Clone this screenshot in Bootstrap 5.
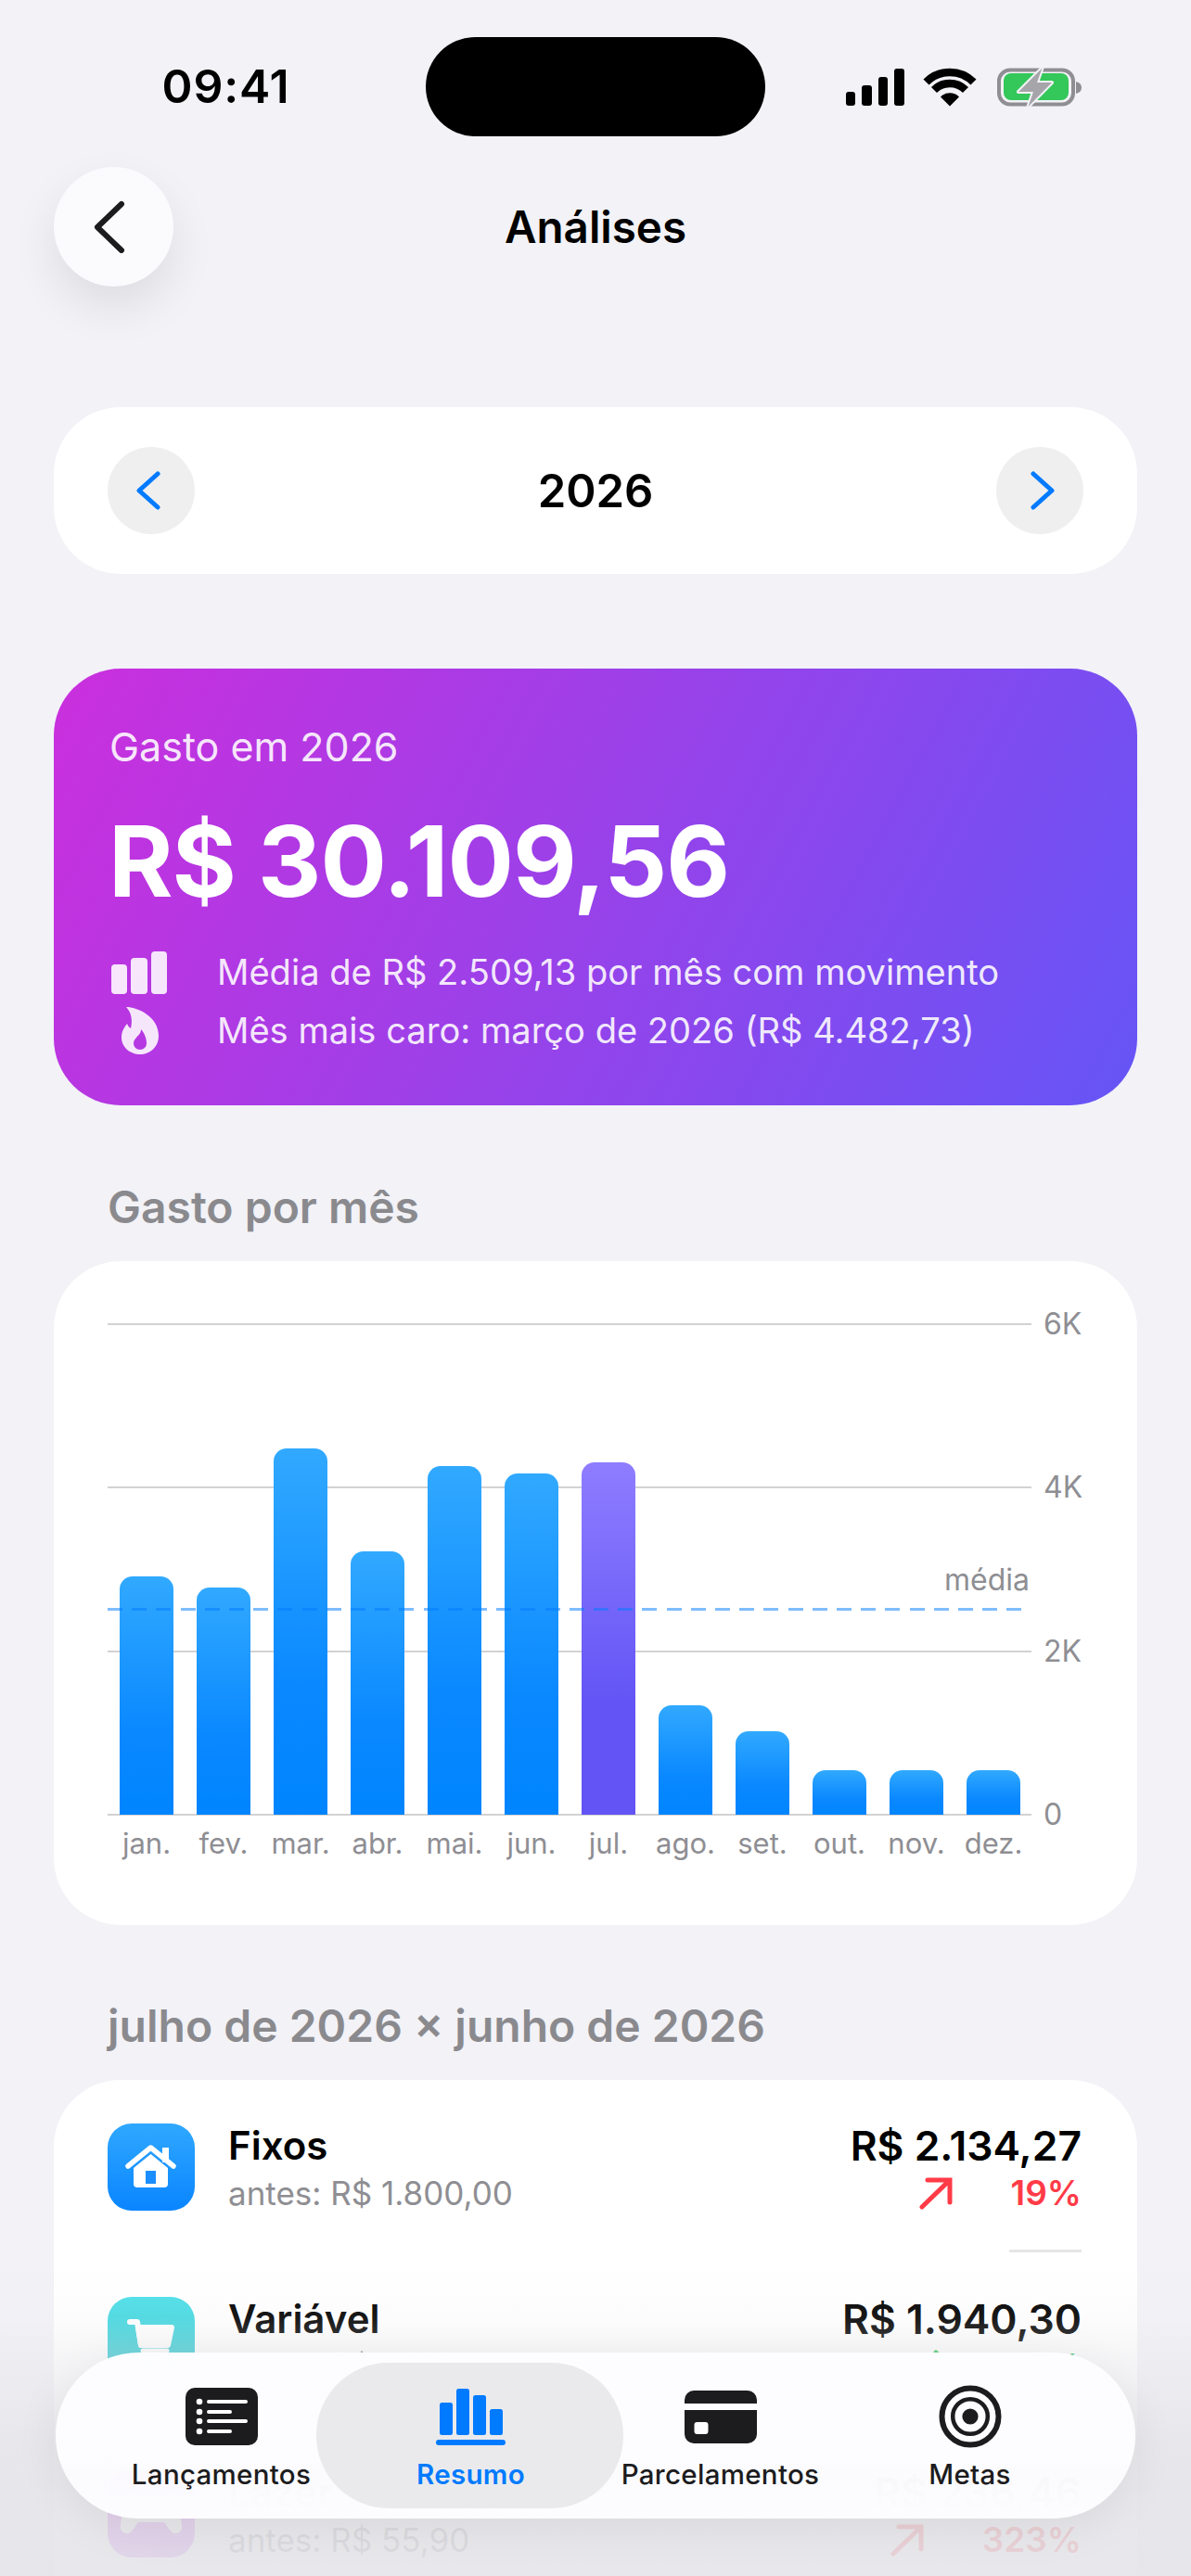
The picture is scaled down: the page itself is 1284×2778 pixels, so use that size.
<!DOCTYPE html>
<html lang="pt-BR">
<head>
    <meta charset="UTF-8">
    <meta name="viewport" content="width=device-width, initial-scale=1.0">
    <title>Análises</title>
    <link href="https://cdn.jsdelivr.net/npm/bootstrap@5.3.0/dist/css/bootstrap.min.css" rel="stylesheet">
    <style>
        body { background: #f2f2f7; font-family: Inter, "Liberation Sans", sans-serif; color: #000; }
        .screen { width: 1284px; height: 2778px; overflow: hidden; background: #f2f2f7; }
        .status-side { width: 459px; height: 107px; }
        .status-time { font-size: 50px; font-weight: 600; padding-left: 28px; letter-spacing: .8px; }
        .island { width: 366px; height: 107px; background: #000; border-radius: 54px; }
        .status-icons { padding-left: 86px; }
        .page { padding: 0 58px; }
        .nav-row { margin-top: 33px; height: 129px; }
        .back-btn { width: 129px; height: 129px; background: #fbfbfe; box-shadow: 0 22px 50px rgba(0,0,0,.09); }
        .back-btn svg { margin-right: 10px; }
        .screen-title { font-size: 47.5px; font-weight: 600; line-height: 58px; }
        .year-label { font-size: 49px; font-weight: 600; line-height: 58px; padding-top: 2px; }
        .soft-card { border: 0; border-radius: 72px; background: #fff; }
        .year-card { margin-top: 130px; height: 180px; padding: 0 58px; }
        .year-btn { width: 94px; height: 94px; background: #efefef; }
        .year-prev svg { margin-right: 6px; }
        .year-next svg { margin-left: 6px; }
        .hero { margin-top: 102px; height: 471px; padding: 60px 60px 0; color: #fff; background: linear-gradient(118deg, #cb2fdd 0%, #6555f6 100%); }
        .hero-label { font-size: 43px; line-height: 48px; color: rgba(255,255,255,.9); }
        .hero-total { font-size: 106px; font-weight: 700; line-height: 120px; margin-top: 40px; margin-left: -1px; letter-spacing: -1px; }
        .hero-line { font-size: 38.1px; line-height: 63px; color: rgba(255,255,255,.9); }
        .hero-lines { margin-top: 28px; }
        .hero-glyph { width: 116px; }
        .section-title { font-size: 48px; font-weight: 600; line-height: 58px; color: #8a8a8e; margin: 81px 0 29px 116px; }
        .section-title.second { margin-top: 80px; }
        .chart-card { height: 716px; padding: 68px 0 0 58px; }
        .plot { width: 1052px; height: 529px; }
        .grid-line { left: 0; width: 996px; height: 2px; background: #d2d2d4; }
        .grid-tick { left: 1009px; font-size: 32px; line-height: 40px; color: #8e8e93; transform: translateY(-20px); }
        .avg-line { left: 0; top: 306px; width: 996px; height: 3px; z-index: 2; background: repeating-linear-gradient(90deg, rgba(0,122,255,.5) 0 16px, transparent 16px 26.2px); }
        .avg-label { right: 58px; top: 256px; font-size: 32px; line-height: 40px; color: #8e8e93; }
        .chart-bars { height: 529px; padding-left: .5px; position: relative; z-index: 1; }
        .chart-col { width: 83px; display: flex; justify-content: center; align-items: flex-end; }
        .chart-bar { width: 58px; border-radius: 14px 14px 0 0; background: linear-gradient(180deg, #31a9ff 0%, #0a88ff 65%, #0085ff 100%); }
        .chart-bar.current { background: linear-gradient(180deg, #8e7dff 0%, #6254f5 70%, #6254f5 100%); }
        .chart-months { margin-top: 11px; padding-left: .5px; }
        .chart-month { width: 83px; text-align: center; font-size: 31px; line-height: 40px; color: #8e8e93; white-space: nowrap; }
        .compare-card { padding: 46px 60px 120px 58px; height: 900px; }
        .compare-row { height: 94px; }
        .cat-icon { width: 94px; height: 94px; border-radius: 26px; margin-right: 36px; margin-top: 1px; flex: none; }
        .cat-blue { background: linear-gradient(180deg, #2fa8ff, #0a85ff); }
        .cat-teal { background: linear-gradient(180deg, #4cdfe8, #2fc2c8); }
        .cat-purple { background: linear-gradient(180deg, #e04cf0, #bf5af2); }
        .row-name, .row-value { font-weight: 600; line-height: 50px; white-space: nowrap; }
        .row-name { font-size: 42px; }
        .row-value { font-size: 44.4px; }
        .row-prev { font-size: 35px; line-height: 52px; color: #8e8e93; white-space: nowrap; }
        .row-delta { font-size: 37px; line-height: 52px; font-weight: 600; gap: 63px; }
        .delta-up { color: #ff3b47; }
        .delta-down { color: #34c759; }
        .row-sep { width: 78px; height: 3px; background: #e6e6e8; margin: 43px 0 47px auto; }
        .bottom-fade { left: 0; right: 0; bottom: 0; height: 340px; z-index: 5; background: linear-gradient(180deg, rgba(229,229,233,0) 0%, rgba(229,229,233,.1) 18%, rgba(229,229,233,.35) 30%, rgba(229,229,233,.82) 60%, rgba(229,229,233,.9) 100%); }
        .tabbar { left: 60px; top: 2537px; width: 1164px; height: 179px; z-index: 6; border-radius: 90px; padding-left: 44px; background: linear-gradient(180deg, rgba(253,253,255,.995) 0%, rgba(253,253,255,.995) 64%, rgba(253,253,255,.9) 72%, rgba(253,253,255,.96) 90%, rgba(253,253,255,.98) 100%); box-shadow: 0 10px 50px rgba(0,0,0,.07); }
        .tab-item { width: 269px; height: 179px; font-size: 29.5px; font-weight: 500; letter-spacing: .3px; color: #1c1c1e; }
        .tab-art { height: 68px; margin-top: 35px; margin-bottom: 8px; }
        .tab-name { line-height: 40px; white-space: nowrap; position: relative; }
        .tab-item.active { color: #007aff; font-weight: 600; }
        .tab-pill { width: 331px; height: 157px; top: 11px; left: -32px; background: #eaeaec; border-radius: 78px; }
    </style>
</head>
<body>
<div class="screen position-relative">
    <!-- Status bar -->
    <div class="d-flex" style="padding-top:40px">
        <div class="status-side d-flex align-items-center justify-content-center"><span class="status-time">09:41</span></div>
        <div class="island"></div>
        <div class="status-side d-flex align-items-center status-icons">
            <svg width="256" height="44" viewBox="911 71 256 44">
                <rect x="912" y="98" width="10" height="15" rx="3"/>
                <rect x="929" y="91" width="11" height="22" rx="3"/>
                <rect x="947" y="82" width="10" height="31" rx="3"/>
                <rect x="964" y="73" width="11" height="40" rx="3"/>
                <g fill="none" stroke="#000" stroke-width="8.5">
                    <path d="M998.5 87.5a36 36 0 0 1 51 0"/>
                    <path d="M1007 96a24 24 0 0 1 34 0"/>
                </g>
                <path d="M1024 113.5l-10-10a14 14 0 0 1 20 0z"/>
                <rect x="1077" y="74.500" width="80" height="37" rx="12" fill="none" stroke="#8e8e93" stroke-width="4"/>
                <rect x="1082" y="78" width="70" height="29" rx="8" fill="#34c759"/>
                <path d="M1160 87c4 1 6 3 6 6.500s-2 5.500-6 6.500z" fill="#8e8e93"/>
                <path d="M1123.500 72.500L1098 98h16l-5.500 16 25.500-26h-16z" fill="#a5a5aa" stroke="#f2f2f7" stroke-width="4" paint-order="stroke" stroke-linejoin="round"/>
            </svg>
        </div>
    </div>

    <div class="page">
        <!-- Nav -->
        <div class="nav-row d-flex align-items-center justify-content-between">
            <div class="back-btn rounded-circle d-flex align-items-center justify-content-center">
                <svg width="34" height="56" viewBox="0 0 34 56" fill="none" stroke="#1c1c1e" stroke-width="6" stroke-linecap="round" stroke-linejoin="round"><path d="M30 3L4 28l26 25"/></svg>
            </div>
            <div class="screen-title">Análises</div>
            <div style="width:129px"></div>
        </div>

        <!-- Year selector -->
        <div class="card soft-card year-card flex-row align-items-center justify-content-between">
            <div class="year-btn year-prev rounded-circle d-flex align-items-center justify-content-center">
                <svg width="26" height="42" viewBox="0 0 26 42" fill="none" stroke="#007aff" stroke-width="5" stroke-linecap="round" stroke-linejoin="round"><path d="M23 3L3 21l20 18"/></svg>
            </div>
            <div class="year-label">2026</div>
            <div class="year-btn year-next rounded-circle d-flex align-items-center justify-content-center">
                <svg width="26" height="42" viewBox="0 0 26 42" fill="none" stroke="#007aff" stroke-width="5" stroke-linecap="round" stroke-linejoin="round"><path d="M3 3l20 18L3 39"/></svg>
            </div>
        </div>

        <!-- Total -->
        <div class="card soft-card hero">
            <div class="hero-label">Gasto em 2026</div>
            <div class="hero-total">R$ 30.109,56</div>
            <div class="hero-lines">
                <div class="hero-line d-flex align-items-center">
                    <div class="hero-glyph">
                        <svg class="d-block" width="62" height="46" viewBox="0 0 62 46" fill="rgba(255,255,255,.88)"><rect x="2" y="14" width="17" height="32" rx="4"/><rect x="23" y="7" width="18" height="39" rx="4"/><rect x="45" y="0" width="17" height="46" rx="4"/></svg>
                    </div>
                    <span>Média de R$ 2.509,13 por mês com movimento</span>
                </div>
                <div class="hero-line d-flex align-items-center">
                    <div class="hero-glyph">
                        <svg class="d-block" style="margin-left:13px" width="40" height="51" viewBox="0 0 40 51" fill="rgba(255,255,255,.88)"><path fill-rule="evenodd" d="M5 0c12 0 35 10 35 31 0 12-9 20-20 20S0 43 0 33c0-7 3-11 6-15 1 2 2 4 4 5C12 15 11 6 5 0zM21 24c0 5-3 6-5 9-2 2-3 4-3 6 0 4 3 7 7 7s7-3 7-7c0-6-3-12-6-15z"/></svg>
                    </div>
                    <span>Mês mais caro: março de 2026 (R$ 4.482,73)</span>
                </div>
            </div>
        </div>
    </div>

    <!-- Monthly chart -->
    <div class="section-title">Gasto por mês</div>
    <div class="page">
        <div class="card soft-card chart-card">
            <div class="plot position-relative" id="plot">
                <div class="avg-line position-absolute"></div>
                <div class="avg-label position-absolute">média</div>
                <div class="chart-bars d-flex" id="bars"></div>
            </div>
            <div class="chart-months d-flex" id="months"></div>
        </div>
    </div>

    <!-- Month comparison -->
    <div class="section-title second">julho de 2026 × junho de 2026</div>
    <div class="page">
        <div class="card soft-card compare-card">
            <div class="compare-row d-flex">
                <div class="cat-icon cat-blue">
                    <svg width="94" height="94" viewBox="0 0 94 94"><path d="M28 48l18.500-15L65 48v17a4 4 0 0 1-4 4H32a4 4 0 0 1-4-4z" fill="#fff"/><rect x="41" y="51" width="11" height="14" fill="#1a8eff"/><path d="M59 26h7v16h-7z" fill="#fff"/><path d="M22 46L46.500 26 71 46" fill="none" stroke="#fff" stroke-width="5.500" stroke-linecap="round" stroke-linejoin="round"/></svg>
                </div>
                <div class="flex-grow-1">
                    <div class="row-name">Fixos</div>
                    <div class="row-prev">antes: R$ 1.800,00</div>
                </div>
                <div class="text-end">
                    <div class="row-value">R$ 2.134,27</div>
                    <div class="row-delta delta-up d-flex justify-content-end align-items-center">
                        <svg width="36" height="36" viewBox="0 0 36 36" fill="none" stroke="currentColor" stroke-width="5" stroke-linecap="round"><path d="M3 33L32 5M9 4h24v24"/></svg>
                        <span>19%</span>
                    </div>
                </div>
            </div>
            <div class="row-sep"></div>
            <div class="compare-row d-flex">
                <div class="cat-icon cat-teal">
                    <svg width="94" height="94" viewBox="0 0 94 94" fill="none" stroke="#fff" stroke-width="6" stroke-linecap="round" stroke-linejoin="round"><path d="M24 27h8l4 25h28"/><path d="M33 33h36l-4 19H36z" fill="#fff"/><path d="M38 58h26" stroke-width="5"/></svg>
                </div>
                <div class="flex-grow-1">
                    <div class="row-name">Variável</div>
                    <div class="row-prev">antes: R$ 2.117,40</div>
                </div>
                <div class="text-end">
                    <div class="row-value">R$ 1.940,30</div>
                    <div class="row-delta delta-down d-flex justify-content-end align-items-center">
                        <svg width="36" height="36" viewBox="0 0 36 36" fill="none" stroke="currentColor" stroke-width="5" stroke-linecap="round"><path d="M3 3l29 28M33 8v24H9"/></svg>
                        <span>8%</span>
                    </div>
                </div>
            </div>
            <div class="row-sep"></div>
            <div class="compare-row d-flex">
                <div class="cat-icon cat-purple">
                    <svg width="94" height="94" viewBox="0 0 94 94" fill="#fff"><path d="M29 27h36c7 0 11 4 12 10l3 22c1 6-3 9-7 9-3 0-5-2-7-5l-5-7H33l-5 7c-2 3-4 5-7 5-4 0-8-3-7-9l3-22c1-6 5-10 12-10z"/></svg>
                </div>
                <div class="flex-grow-1">
                    <div class="row-name">Lazer</div>
                    <div class="row-prev">antes: R$ 55,90</div>
                </div>
                <div class="text-end">
                    <div class="row-value">R$ 236,46</div>
                    <div class="row-delta delta-up d-flex justify-content-end align-items-center">
                        <svg width="36" height="36" viewBox="0 0 36 36" fill="none" stroke="currentColor" stroke-width="5" stroke-linecap="round"><path d="M3 33L32 5M9 4h24v24"/></svg>
                        <span>323%</span>
                    </div>
                </div>
            </div>
        </div>
    </div>

    <div class="bottom-fade position-absolute"></div>

    <!-- Tab bar -->
    <div class="tabbar position-absolute d-flex">
        <div class="tab-item d-flex flex-column align-items-center">
            <div class="tab-art d-flex align-items-center">
                <svg width="78" height="62" viewBox="0 0 78 62"><rect width="78" height="62" rx="10" fill="#1c1c1e"/><g fill="#fff"><circle cx="15" cy="15" r="3.300"/><circle cx="15" cy="26" r="3.300"/><circle cx="15" cy="36" r="3.300"/><circle cx="15" cy="47" r="3.300"/></g><g stroke="#fff" stroke-width="4" stroke-linecap="round"><path d="M25 15h40M25 26h23M25 36h40M25 47h23"/></g></svg>
            </div>
            <span class="tab-name">Lançamentos</span>
        </div>
        <div class="tab-item active d-flex flex-column align-items-center position-relative">
            <div class="tab-pill position-absolute"></div>
            <div class="tab-art d-flex align-items-center position-relative">
                <svg width="76" height="62" viewBox="0 0 76 62" fill="#007aff"><rect x="4" y="16" width="14" height="35" rx="2.500"/><rect x="22" y="1" width="14" height="50" rx="2.500"/><rect x="40" y="8" width="14" height="43" rx="2.500"/><rect x="58" y="23" width="14" height="28" rx="2.500"/><rect x="0" y="56" width="75" height="6" rx="3"/></svg>
            </div>
            <span class="tab-name">Resumo</span>
        </div>
        <div class="tab-item d-flex flex-column align-items-center">
            <div class="tab-art d-flex align-items-center">
                <svg width="78" height="57" viewBox="0 0 78 57"><rect width="78" height="57" rx="10" fill="#1c1c1e"/><rect y="14" width="78" height="7" fill="#fdfdff"/><rect x="10.500" y="34" width="15" height="13" rx="3" fill="#fdfdff"/></svg>
            </div>
            <span class="tab-name">Parcelamentos</span>
        </div>
        <div class="tab-item d-flex flex-column align-items-center">
            <div class="tab-art d-flex align-items-center">
                <svg width="68" height="68" viewBox="0 0 68 68" fill="none" stroke="#1c1c1e"><circle cx="34" cy="34" r="30.500" stroke-width="6"/><circle cx="34" cy="34" r="18.800" stroke-width="4.500"/><circle cx="34" cy="34" r="8.600" fill="#1c1c1e" stroke="none"/></svg>
            </div>
            <span class="tab-name">Metas</span>
        </div>
    </div>
</div>

<script src="https://cdn.jsdelivr.net/npm/bootstrap@5.3.0/dist/js/bootstrap.bundle.min.js"></script>
<script>
    // Gasto por mês
    const monthData = [
        ["jan.", 2910], ["fev.", 2780], ["mar.", 4482.73], ["abr.", 3220],
        ["mai.", 4262], ["jun.", 4172], ["jul.", 4308], ["ago.", 1340],
        ["set.", 1020], ["out.", 545], ["nov.", 545], ["dez.", 545]
    ];
    const plotHeight = 529;
    const plot = document.getElementById("plot");

    [6000, 4000, 2000, 0].forEach(value => {
        const top = plotHeight - value / 6000 * plotHeight;
        const line = document.createElement("div");
        line.className = "grid-line position-absolute";
        line.style.top = (top - 1) + "px";
        plot.prepend(line);
        const tick = document.createElement("div");
        tick.className = "grid-tick position-absolute";
        tick.style.top = top + "px";
        tick.textContent = value ? (value / 1000) + "K" : "0";
        plot.appendChild(tick);
    });

    monthData.forEach(([label, value], i) => {
        const col = document.createElement("div");
        col.className = "chart-col";
        const bar = document.createElement("div");
        bar.className = "chart-bar" + (i === 6 ? " current" : "");
        bar.style.height = (value / 6000 * plotHeight) + "px";
        col.appendChild(bar);
        document.getElementById("bars").appendChild(col);

        const name = document.createElement("div");
        name.className = "chart-month";
        name.textContent = label;
        document.getElementById("months").appendChild(name);
    });
</script>
</body>
</html>
